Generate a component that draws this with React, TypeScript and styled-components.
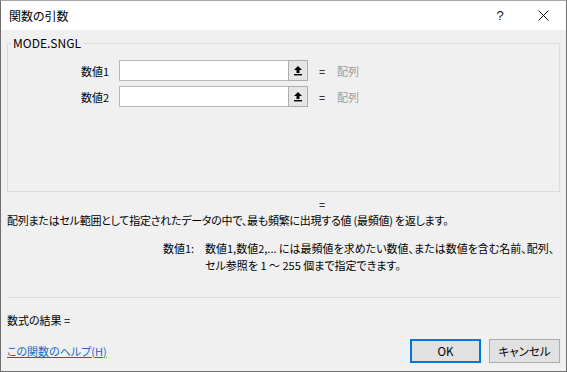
import React from 'react';
import styled, { createGlobalStyle } from 'styled-components';

const GlobalStyle = createGlobalStyle`
    html, body {
        margin: 0;
        padding: 0;
        background: #f0f0f0;
    }
    body {
        font-family: "Noto Sans CJK JP", "Noto Sans", sans-serif;
        font-size: 11px;
        color: #000000;
        font-feature-settings: "palt";
    }
`;

const Dialog = styled.div`
    width: 567px;
    height: 372px;
    box-sizing: border-box;
    border: 1px solid #6e6e6e;
    border-top-color: #a8a8a8;
    background: #f0f0f0;
    display: flex;
    flex-direction: column;
`;

const TitleBar = styled.div`
    height: 29px;
    background: #ffffff;
    display: flex;
    align-items: center;
    padding-left: 8px;
`;

const Title = styled.div`
    flex: 1;
    line-height: 16px;
    font-size: 12px;
`;

const TitleButton = styled.div<{ $w: number }>`
    width: ${(p) => p.$w}px;
    height: 29px;
    display: flex;
    align-items: center;
    justify-content: center;
    font-family: "Liberation Sans", sans-serif;
    font-size: 13px;
    color: #111;
`;

const Body = styled.div`
    flex: 1;
    display: flex;
    flex-direction: column;
    padding: 6px 6px 0 6px;
`;

const Group = styled.fieldset`
    margin: 0;
    height: 156px;
    box-sizing: border-box;
    border: 1px solid #dcdcdc;
    padding: 10px 0 0 0;
    display: flex;
    flex-direction: column;
    gap: 5px;
`;

const Legend = styled.legend`
    margin-left: 3px;
    padding: 0 2px;
    line-height: 14px;
    font-size: 12px;
`;

const ArgRow = styled.div`
    display: grid;
    grid-template-columns: 111px 169px 20px 27px auto;
    align-items: center;
    height: 21px;
`;

const ArgLabel = styled.div`
    text-align: right;
    padding-right: 10px;
    line-height: 16px;
`;

const ArgInput = styled.div`
    height: 21px;
    box-sizing: border-box;
    border: 1px solid #b8b8b8;
    border-right: none;
    background: #ffffff;
`;

const PickButton = styled.div`
    height: 21px;
    box-sizing: border-box;
    border: 1px solid #adadad;
    background: #e6e6e6;
    display: flex;
    align-items: center;
    justify-content: center;
`;

const Eq = styled.div`
    text-align: center;
    padding-left: 1px;
    line-height: 16px;
`;

const Hint = styled.div`
    color: #9a9a9a;
    padding-left: 2px;
    line-height: 16px;
`;

const ResultEq = styled.div`
    margin-top: 4px;
    padding-left: 312px;
    line-height: 16px;
`;

const Description = styled.div`
    line-height: 16px;
    white-space: nowrap;
    letter-spacing: -0.25px;
`;

const ArgHelp = styled.div`
    margin-top: 12px;
    display: grid;
    grid-template-columns: 156px 42px auto;
    line-height: 17px;
    white-space: nowrap;
`;

const ArgHelpLabel = styled.div`
    grid-column: 2;
`;

const Separator = styled.hr`
    margin: 23px 0 0 0;
    border: none;
    border-top: 1px solid #dadada;
    height: 0;
`;

const ResultLine = styled.div`
    margin-top: 14px;
    line-height: 16px;
`;

const Footer = styled.div`
    margin-top: 11px;
    display: flex;
    align-items: center;
    gap: 8px;
`;

const HelpLink = styled.a`
    flex: 1;
    color: #1a66c8;
    text-decoration: underline;
    line-height: 16px;
    cursor: pointer;
`;

const DialogButton = styled.button<{ $primary?: boolean }>`
    width: 71px;
    height: 24px;
    box-sizing: border-box;
    background: #e1e1e1;
    border: ${(p) => (p.$primary ? '2px solid #0078d7' : '1px solid #adadad')};
    font-family: inherit;
    font-size: 11.5px;
    font-feature-settings: "palt";
    color: #000;
    padding: 0;
    line-height: 16px;
`;

function PickIcon() {
    return (
        <svg width="10" height="11" viewBox="0 0 10 11">
            <path d="M5 1 L1 5 H3.5 V8 H6.5 V5 H9 Z" fill="#000" />
            <rect x="1" y="9" width="8" height="1.4" fill="#000" />
        </svg>
    );
}

function CloseIcon() {
    return (
        <svg width="11" height="11" viewBox="0 0 11 11">
            <path d="M0.5 0.5 L10.5 10.5 M10.5 0.5 L0.5 10.5" stroke="#111" strokeWidth="1" />
        </svg>
    );
}

const args = ['数値1', '数値2'];

export default function App() {
    return (
        <>
            <GlobalStyle />
            <Dialog>
                <TitleBar>
                    <Title>関数の引数</Title>
                    <TitleButton $w={40}>?</TitleButton>
                    <TitleButton $w={46}>
                        <CloseIcon />
                    </TitleButton>
                </TitleBar>
                <Body>
                    <Group>
                        <Legend>MODE.SNGL</Legend>
                        {args.map((name) => (
                            <ArgRow key={name}>
                                <ArgLabel>{name}</ArgLabel>
                                <ArgInput />
                                <PickButton>
                                    <PickIcon />
                                </PickButton>
                                <Eq>=</Eq>
                                <Hint>配列</Hint>
                            </ArgRow>
                        ))}
                    </Group>
                    <ResultEq>=</ResultEq>
                    <Description>
                        配列またはセル範囲として指定されたデータの中で、最も頻繁に出現する値 (最頻値) を返します。
                    </Description>
                    <ArgHelp>
                        <ArgHelpLabel>数値1:</ArgHelpLabel>
                        <div>
                            数値1,数値2,... には最頻値を求めたい数値、または数値を含む名前、配列、
                            <br />
                            セル参照を 1 ～ 255 個まで指定できます。
                        </div>
                    </ArgHelp>
                    <Separator />
                    <ResultLine>数式の結果 =</ResultLine>
                    <Footer>
                        <HelpLink>この関数のヘルプ(H)</HelpLink>
                        <DialogButton $primary>OK</DialogButton>
                        <DialogButton>キャンセル</DialogButton>
                    </Footer>
                </Body>
            </Dialog>
        </>
    );
}
